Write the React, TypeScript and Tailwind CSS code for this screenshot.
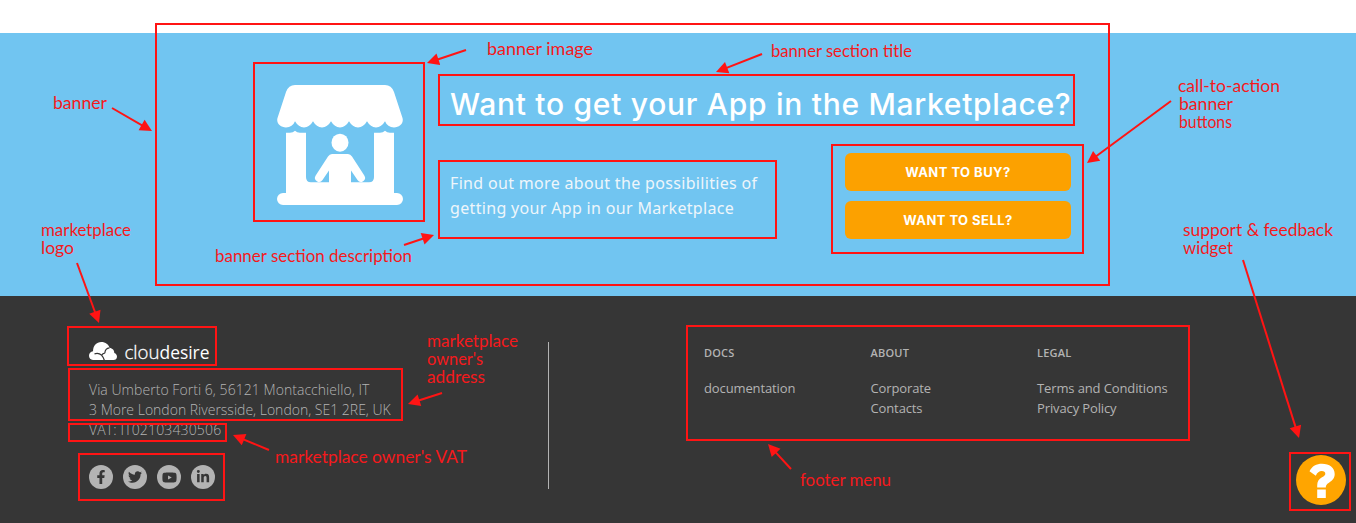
import React from "react";
import { FaFacebookF, FaTwitter, FaYoutube, FaLinkedinIn } from "react-icons/fa";

type Box = [x: number, y: number, right: number, bottom: number];
type Arrow = [x1: number, y1: number, x2: number, y2: number];
type Label = [text: string, x: number, baseline: number, width: number];

const boxes: Box[] = [
  [155, 23, 1110, 286],
  [253, 62, 425, 222],
  [438, 74, 1075, 126],
  [438, 160, 777, 239],
  [831, 144, 1084, 254],
  [67, 326, 217, 366],
  [68, 368, 403, 421],
  [68, 423, 227, 442],
  [78, 453, 225, 501],
  [686, 325, 1190, 441],
  [1289, 452, 1351, 511],
];

const arrows: Arrow[] = [
  [466, 50, 427, 63],
  [762, 54, 716, 72],
  [112, 108, 152, 131],
  [1171, 101, 1087, 163],
  [404, 245, 434, 235],
  [77, 263, 99, 323],
  [442, 393, 408, 404],
  [269, 450, 233, 435],
  [791, 469, 768, 444],
  [1243, 260, 1299, 438],
];

const labels: Label[] = [
  ["banner image", 487, 55, 106],
  ["banner section title", 771, 57, 141],
  ["banner", 53, 109, 54],
  ["call-to-action", 1178, 92, 102],
  ["banner", 1179, 110, 54],
  ["buttons", 1179, 128, 53],
  ["marketplace", 41, 236, 90],
  ["logo", 41, 254, 33],
  ["banner section description", 215, 262, 197],
  ["support & feedback", 1183, 236, 150],
  ["widget", 1183, 254, 50],
  ["marketplace", 427, 347, 91],
  ["owner's", 427, 365, 56],
  ["address", 427, 383, 58],
  ["marketplace owner's VAT", 275, 463, 192],
  ["footer menu", 800, 486, 91],
];

function ArrowMark({ a }: { a: Arrow }) {
  const [x1, y1, x2, y2] = a;
  const angle = (Math.atan2(y2 - y1, x2 - x1) * 180) / Math.PI;
  const length = Math.hypot(x2 - x1, y2 - y1);
  return (
    <g transform={`translate(${x2} ${y2}) rotate(${angle})`}>
      <path d={`M${-length} 0H-8`} stroke="#ff1414" strokeWidth="2" />
      <path d="M0 0L-12 -6V6Z" fill="#ff1414" />
    </g>
  );
}

function Annotations() {
  return (
    <svg className="pointer-events-none absolute inset-0" width="1356" height="523" viewBox="0 0 1356 523" fill="none">
      {boxes.map(([x, y, r, b]) => (
        <rect key={`${x}-${y}`} x={x + 1} y={y + 1} width={r - x - 2} height={b - y - 2} stroke="#ff1414" strokeWidth="2" />
      ))}
      {arrows.map((a) => (
        <ArrowMark key={a.join()} a={a} />
      ))}
      {labels.map(([text, x, y, w]) => (
        <text
          key={`${x}-${y}`}
          x={x}
          y={y}
          textLength={w}
          lengthAdjust="spacingAndGlyphs"
          fill="#f5191c"
          className="font-['Lato',sans-serif] text-[17px]"
        >
          {text}
        </text>
      ))}
    </svg>
  );
}

function StoreIcon() {
  return (
    <svg className="mt-[52px] shrink-0" width="126" height="120" viewBox="0 0 126 120" fill="white">
      <path d="M18 0H108Q114.500 0 117 7L125.500 33C127 38 122.500 42.400 117 42.400Q110.500 42.400 108 36.300Q104.500 42.400 99 42.400T90 36.300Q86.500 42.400 81 42.400T72 36.300Q68.500 42.400 63 42.400T54 36.300Q50.500 42.400 45 42.400T36 36.300Q32.500 42.400 27 42.400T18 36.300Q15.500 42.400 9 42.400C3.500 42.400 -1 38 .5 33L9 7Q11.500 0 18 0Z" />
      <path d="M9 47.700H13Q16 47.500 18 45.700Q20 47.500 23 47.700H29V92Q29 97.300 34 97.300H92Q97 97.300 97 92V47.700H103Q106 47.500 108 45.700Q110 47.500 113 47.700H117V108H120A6 6 0 0 1 120 120H6A6 6 0 0 1 6 108H9Z" />
      <ellipse cx="63" cy="57.700" rx="8.500" ry="9" />
      <path d="M55 69H71Q73.500 69 75 71.500L87.300 90.500A4 4 0 0 1 80.500 95L74 85.500V99H52V85.500L45.500 95A4 4 0 0 1 38.700 90.500L51 71.500Q52.500 69 55 69Z" />
    </svg>
  );
}

function Logo() {
  return (
    <svg className="block overflow-visible" width="124" height="24" viewBox="0 0 124 24" fill="white">
      <path d="M4 20C1.500 20 0 18 0 15.800C0 13.300 1.600 11.500 4 11.200C4.200 5.500 7.500 2 12.300 2C16.500 2 19.700 4.500 20.500 7.800C23.500 8.200 25.500 10.500 25.300 13C27 13.500 28 15 28 16.700C28 18.700 26.500 20 24.500 20Z" />
      <path d="M20.500 7.800C17.500 8 16 10.300 15.800 13.200M5.500 13.800C10 12.500 13.500 14.500 15.300 20.300M15.800 13.200C14.500 13.300 13.300 14 12.900 15" fill="none" stroke="#363636" strokeWidth="1.200" />
      <text x="35.500" y="19" textLength="35" lengthAdjust="spacingAndGlyphs" stroke="white" strokeWidth="0.3" className="font-['Open_Sans',sans-serif] text-[19px] font-light">clou</text>
      <text x="70.500" y="19" textLength="50" lengthAdjust="spacingAndGlyphs" className="font-['Open_Sans',sans-serif] text-[19px] font-medium">desire</text>
    </svg>
  );
}

const socialIcons = [
  { name: "facebook", icon: <FaFacebookF size={14} /> },
  { name: "twitter", icon: <FaTwitter size={14} /> },
  { name: "youtube", icon: <FaYoutube size={15} /> },
  { name: "linkedin", icon: <FaLinkedinIn size={14} /> },
];

function MenuColumn({ title, links, className }: { title: string; links: string[]; className: string }) {
  return (
    <div className={className}>
      <h3 className="text-[11px] leading-5 font-semibold tracking-[0.2px]">{title}</h3>
      <ul className="mt-[15px] text-[13px] leading-5 tracking-[-0.12px]">
        {links.map((l) => (
          <li key={l}>{l}</li>
        ))}
      </ul>
    </div>
  );
}

export default function App() {
  return (
    <div className="relative h-[523px] w-[1356px] overflow-hidden bg-white pt-[33px] font-['Open_Sans',sans-serif]">
      <section className="flex h-[263px] bg-[#71c5f1] pl-[277px] text-white">
        <StoreIcon />
        <div className="ml-[47px] w-[621px] pt-[51px]">
          <h1 className="font-['Inter',sans-serif] text-[30px] leading-10 font-medium tracking-[0.71px] whitespace-nowrap">
            Want to get your App in the Marketplace?
          </h1>
          <div className="mt-[29px] flex justify-between">
            <p className="pt-[18px] font-['Noto_Sans',sans-serif] text-[16px] leading-[25px] tracking-[0.33px] whitespace-nowrap text-[#eef6fb]">
              Find out more about the possibilities of
              <br />
              getting your App in our Marketplace
            </p>
            <div className="flex w-[226px] flex-col gap-2.5 font-['Inter',sans-serif] text-[13px] font-bold tracking-[0.45px]">
              <button className="h-[38px] rounded-md bg-[#fca100] pt-px">WANT TO BUY?</button>
              <button className="h-[38px] rounded-md bg-[#fca100] pt-px">WANT TO SELL?</button>
            </div>
          </div>
        </div>
      </section>

      <footer className="flex h-[227px] bg-[#363636] text-[#b3b3b3]">
        <div className="ml-[89px] w-[459px] pt-[44px]">
          <Logo />
          <address className="mt-4 text-[14px] leading-5 font-light whitespace-nowrap not-italic">
            <span className="tracking-[0.05px]">Via Umberto Forti 6, 56121 Montacchiello, IT</span>
            <br />
            3 More London Riversside, London, SE1 2RE, UK
            <br />
            <span className="tracking-[0.15px]">VAT: IT02103430506</span>
          </address>
          <div className="mt-[25px] flex gap-2.5">
            {socialIcons.map(({ name, icon }) => (
              <a key={name} className="flex size-6 items-center justify-center rounded-full bg-[#b3b3b3] text-[#363636]">
                {icon}
              </a>
            ))}
          </div>
        </div>
        <div className="mt-[46px] h-[147px] w-px bg-[#b3b3b3]" />
        <nav className="ml-[155px] flex pt-[47px] whitespace-nowrap">
          <MenuColumn className="w-[166.500px]" title="DOCS" links={["documentation"]} />
          <MenuColumn className="w-[166.500px]" title="ABOUT" links={["Corporate", "Contacts"]} />
          <MenuColumn className="w-[150px]" title="LEGAL" links={["Terms and Conditions", "Privacy Policy"]} />
        </nav>
      </footer>

      <button className="absolute top-[455px] left-[1296px] size-[50px] rounded-full bg-[#ffa500]">
        <svg width="50" height="50" viewBox="0 0 50 50" fill="white">
          <path d="M13.500 16.200C16 11 20.500 8.700 26 8.700C33.500 8.700 38.700 12.700 38.700 19C38.700 23.200 36.500 25.500 33 27.700C30.500 29.300 29.800 30.200 29.800 32.500H21.200V30.500C21.200 26.500 22.800 24.300 26 22.300C28.300 20.900 29.300 20.200 29.300 18.700C29.300 17 28 16 25.700 16C23.200 16 21.300 17.500 19.800 20.700Z" />
          <path d="M21.200 34.500H29.800V43H21.200Z" />
        </svg>
      </button>

      <Annotations />
    </div>
  );
}
